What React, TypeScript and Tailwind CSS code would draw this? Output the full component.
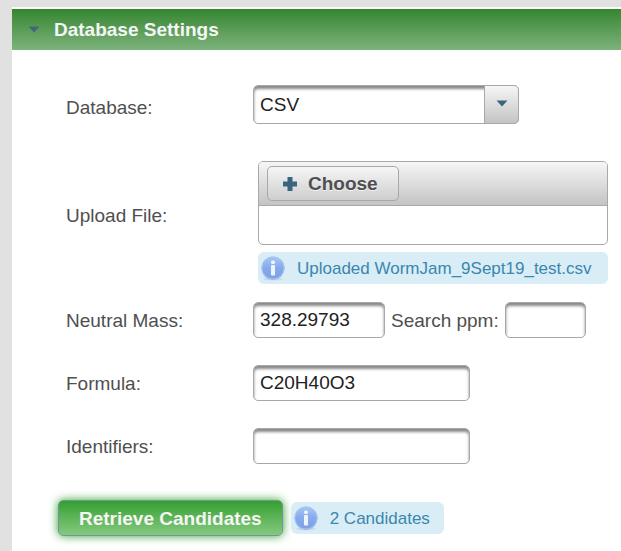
import { useState, type InputHTMLAttributes } from "react";

function Caret({ color }: { color: string }) {
  return (
    <svg aria-hidden="true" width="12" height="7" viewBox="0 0 12 7">
      <path d="M0.5 0.5h11L6 6.5z" fill={color} />
    </svg>
  );
}

function InfoIcon() {
  return (
    <svg aria-hidden="true" width="24" height="25" viewBox="0 0 24 25" className="shrink-0">
      <defs>
        <linearGradient id="info-fill" x1="0" y1="0" x2="0" y2="1">
          <stop offset="0" stopColor="#a9c8f4" />
          <stop offset="0.5" stopColor="#86aaec" />
          <stop offset="1" stopColor="#7c9fe8" />
        </linearGradient>
      </defs>
      <ellipse cx="12" cy="23" rx="10" ry="1.4" fill="#c8dbe8" />
      <circle cx="12" cy="12" r="11.5" fill="url(#info-fill)" />
      <circle cx="12" cy="12" r="11" fill="none" stroke="#a7c3f0" />
      <rect x="10" y="4.5" width="4" height="3.5" rx="1.5" fill="#eef4fc" />
      <rect x="10" y="9" width="4" height="10.5" rx="0.8" fill="#eef4fc" />
    </svg>
  );
}

function Message({ text }: { text: string }) {
  return (
    <div className="flex h-8 items-center gap-3 rounded-md bg-[#d9edf7] pr-3.5 pl-[3px] text-[17px] whitespace-nowrap text-[#3a87ad]">
      <InfoIcon />
      <span>{text}</span>
    </div>
  );
}

function TextInput({ className, ...rest }: InputHTMLAttributes<HTMLInputElement>) {
  return (
    <input
      type="text"
      className={`h-9 rounded-[5px] border border-[#a8a8a8] bg-white px-1.5 text-[#222222] shadow-[inset_0_3px_3px_#888888] outline-none ${className}`}
      {...rest}
    />
  );
}

export default function App() {
  const [database, setDatabase] = useState("CSV");

  return (
    <div className="min-h-screen bg-[#e1e1e1] pt-[7px] pl-3 font-['Liberation_Sans',Arial,sans-serif] text-[19px] leading-[25px] text-[#4f4f4f]">
      <main className="min-h-[calc(100vh-7px)] bg-white pt-0.5">
        <h2>
          <button
            type="button"
            aria-expanded="true"
            className="flex h-[41px] w-full items-center gap-3.5 bg-linear-to-b from-[#33862f] to-[#7db37c] pl-4 font-bold text-[#f5f5f5]"
          >
            <Caret color="#42687c" />
            Database Settings
          </button>
        </h2>

        <form className="pt-[35px] pr-[13px]" onSubmit={(e) => e.preventDefault()}>
          <div className="grid grid-cols-[187px_1fr] items-center pl-[54px]">
            <label htmlFor="database">Database:</label>
            <div className="pb-1.5">
              <div className="relative h-[39px] w-[266px]">
                <select
                  id="database"
                  value={database}
                  onChange={(e) => setDatabase(e.target.value)}
                  className="h-full w-full appearance-none rounded-[5px] border border-[#a8a8a8] bg-white px-1.5 text-[#222222] shadow-[inset_0_3px_3px_#888888] outline-none"
                >
                  <option>CSV</option>
                </select>
                <span className="pointer-events-none absolute inset-y-0 right-0 flex w-[35px] items-center justify-center rounded-r-[5px] border border-[#a8a8a8] bg-linear-to-b from-[#f6f6f6] to-[#c4c4c4] pb-0.5">
                  <Caret color="#38667f" />
                </span>
              </div>
            </div>

            <label htmlFor="upload" className="pt-4">Upload File:</label>
            <div className="pt-[31px] pl-[5px]">
              <div className="rounded-[5px] border border-[#a8a8a8] bg-white">
                <div className="rounded-t border-b border-[#a8a8a8] bg-linear-to-b from-[#f6f6f6] to-[#c4c4c4] px-2 py-1">
                  <button
                    id="upload"
                    type="button"
                    className="flex h-[35px] items-center gap-[11px] rounded-[5px] border border-[#a8a8a8] bg-linear-to-b from-[#f6f6f6] to-[#cecece] pr-5 pl-[15px] font-bold [text-shadow:0_1px_0_rgba(255,255,255,0.7)]"
                  >
                    <svg aria-hidden="true" width="14" height="14" viewBox="0 0 14 14">
                      <path d="M4.5 0h5v4.5H14v5H9.5V14h-5V9.5H0v-5h4.5z" fill="#38667f" />
                    </svg>
                    Choose
                  </button>
                </div>
                <div className="h-[38px]" />
              </div>
              <div className="pt-[7px]">
                <Message text="Uploaded WormJam_9Sept19_test.csv" />
              </div>
            </div>
          </div>

          <div className="grid grid-cols-[187px_1fr] items-center gap-y-[27px] pt-[18px] pl-[54px]">
            <label htmlFor="mass">Neutral Mass:</label>
            <div className="flex items-center gap-1.5">
              <TextInput id="mass" className="w-[132px]" defaultValue="328.29793" />
              <label htmlFor="ppm" className="whitespace-nowrap">Search ppm:</label>
              <TextInput id="ppm" className="w-[81px]" />
            </div>

            <label htmlFor="formula">Formula:</label>
            <TextInput id="formula" className="w-[217px]" defaultValue="C20H40O3" />

            <label htmlFor="identifiers">Identifiers:</label>
            <TextInput id="identifiers" className="w-[217px]" />
          </div>

          <div className="flex items-center gap-2 pt-9 pb-4 pl-[46px]">
            <button
              type="submit"
              className="h-9 rounded-[5px] border border-[#6f94a8] bg-linear-to-b from-[#33a02c] to-[#84c97f] px-5 font-bold whitespace-nowrap text-[#f5f5f5] shadow-[0_0_10px_#33a02c]"
            >
              Retrieve Candidates
            </button>
            <Message text="2 Candidates" />
          </div>
        </form>
      </main>
    </div>
  );
}
